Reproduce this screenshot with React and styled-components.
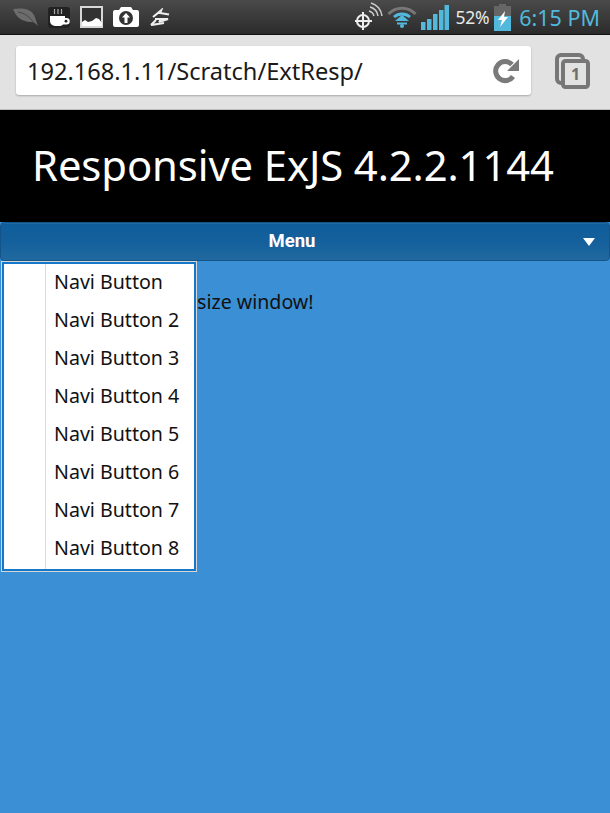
import React from "react";
import styled, { createGlobalStyle } from "styled-components";

const Global = createGlobalStyle`
  html, body { margin: 0; padding: 0; background: #3a8fd5; }
  * { box-sizing: border-box; }
`;
const Page = styled.div`
  position: relative; width: 610px; height: 813px; overflow: hidden;
  display: flex; flex-direction: column; background: #3a8fd5;
  font-family: "Noto Sans", "Open Sans", sans-serif;
`;
const StatusBar = styled.div`
  height: 35px; display: flex; align-items: center; padding: 0 10px 0 13px;
  background: linear-gradient(#4a4a4a, #2b2b2b); border-bottom: 1px solid #111;
`;
const IconGroup = styled.div`display: flex; align-items: center; gap: 10px;`;
const StatusRight = styled.div`margin-left: auto; display: flex; align-items: center; gap: 4px;`;
const Percent = styled.span`font-size: 17.500px; color: #e8e8e8; margin: 0 1px 0 3px; letter-spacing: -0.3px;`;
const Clock = styled.span`font-size: 21.500px; color: #52b9dc; margin-left: 4px; white-space: nowrap;`;
const Chrome = styled.div`
  height: 75px; background: #e2e2e2; border-bottom: 1px solid #bdbdbd;
  display: flex; align-items: center; padding: 0 20px 3px 16px;
`;
const UrlBox = styled.div`
  width: 515px; height: 49px; background: #fff; border-radius: 3px; box-shadow: 0 1px 2px rgba(0,0,0,.25);
  display: flex; align-items: center; justify-content: space-between; padding: 0 11px 0 11px;
`;
const UrlText = styled.span`font-size: 23.600px; color: #1a1a1a; white-space: nowrap;`;
const TabsButton = styled.div`margin-left: auto; display: flex;`;
const Banner = styled.div`
  height: 112px; background: #000; color: #fff; display: flex; align-items: center;
  padding: 0 0 3px 32px; font-size: 41.800px; white-space: nowrap; letter-spacing: -0.1px;
`;
const MenuBar = styled.div`
  position: relative; height: 39px; display: flex; align-items: center; justify-content: center;
  background: linear-gradient(#0e5d9b, #14609c 50%, #21699f); border: 1px solid #155489; border-radius: 4px;
  color: #fff; font: bold 18.500px "Roboto", "Noto Sans", sans-serif; padding: 0 26px 2px 0;
  box-shadow: inset 0 1px 0 #1e6aa6;
`;
const Arrow = styled.span`
  position: absolute; right: 14px; top: 15px; width: 0; height: 0;
  border-left: 6.500px solid transparent; border-right: 6.500px solid transparent; border-top: 8px solid #fff;
`;
const Content = styled.div`
  flex: 1; padding: 27px 0 0 197px; font-size: 19.600px; color: #111; white-space: nowrap;
`;
const Dropdown = styled.div`
  position: absolute; left: 2px; top: 262px; width: 194px; height: 309px;
  background: #fff; border: 2px solid #1577c9; outline: 1px solid #d6d6d6;
  box-shadow: 1px 1px 0 #ddd; display: flex; flex-direction: column;
`;
const Divider = styled.div`position: absolute; left: 41px; top: 0; bottom: 0; width: 1px; background: #dcdcdc;`;
const Item = styled.div`
  height: 38px; flex: none; display: flex; align-items: center; padding: 0 0 4px 50px;
  font-size: 19.600px; color: #111; white-space: nowrap;
`;

const Leaf = () => (
  <svg width="25" height="18" viewBox="0 0 25 18">
    <path d="M0 1C8 0 17 0 21 7c1.500 3 2 6 4 11-3-3-4-4-7-4C9 14 3 9 0 1z" fill="#6c6c6c"/>
    <path d="M5 4c6 1 11 4 16 11" stroke="#444" strokeWidth="1" fill="none"/>
  </svg>
);
const Cup = () => (
  <svg width="22" height="21" viewBox="0 0 22 21">
    <rect width="22" height="21" rx="3" fill="#222"/>
    <path d="M6.500 2v5M10 2v5M13.500 2v5" stroke="#aaa" strokeWidth="1.200"/>
    <path d="M2 9h15v2h1.500a3.200 3.200 0 0 1 0 6.500H15c-1 1-2.500 1.500-4 1.500H7a5 5 0 0 1-5-5z" fill="#fff"/>
    <circle cx="18" cy="14.200" r="1.400" fill="#222"/>
  </svg>
);
const Picture = () => (
  <svg width="23" height="22" viewBox="0 0 23 22">
    <rect x="1" y="1" width="21" height="20" fill="#333" stroke="#d8d8d8" strokeWidth="2"/>
    <path d="M2 20v-4l3-2 3 2 4-1 4-3 3 1 3 4v3z" fill="#fff"/>
  </svg>
);
const Camera = () => (
  <svg width="26" height="20" viewBox="0 0 26 20">
    <path d="M2 3h4l2-3h10l2 3h4a2 2 0 0 1 2 2v13a2 2 0 0 1-2 2H2a2 2 0 0 1-2-2V5a2 2 0 0 1 2-2z" fill="#fff"/>
    <circle cx="13" cy="11" r="7" fill="#333"/>
    <path d="M13 6l4 4.500h-2.500v5.500h-3v-5.500H9z" fill="#fff"/>
  </svg>
);
const Zip = () => (
  <svg width="22" height="18" viewBox="0 0 22 18" fill="none" stroke="#eee" strokeWidth="2.200" strokeLinejoin="miter">
    <path d="M4 9l8-6.500L11 5l9 1.500" />
    <path d="M6 11h13l-9 3 1.500-1.500" />
    <path d="M2 17l5-5M2 17l13-2" />
  </svg>
);
const Gps = () => (
  <svg width="28" height="31" viewBox="0 0 28 31" fill="none" stroke="#eee">
    <circle cx="8" cy="19" r="6" strokeWidth="2"/>
    <path d="M8 10v18M-1 19h18" strokeWidth="2"/>
    <path d="M14 9a7 7 0 0 1 5 5M15 5a11 11 0 0 1 8 9M16 1a15 15 0 0 1 11 13" stroke="#ccc" strokeWidth="1.500"/>
  </svg>
);
const Wifi = () => (
  <svg width="30" height="22" viewBox="0 0 30 22" fill="none">
    <path d="M1.500 8a19 19 0 0 1 27 0" stroke="#777" strokeWidth="3"/>
    <path d="M7 11a12 12 0 0 1 16 0" stroke="#52b9dc" strokeWidth="3"/>
    <path d="M15 9l7 6H8z" fill="#52b9dc"/>
    <path d="M10 17.500h10" stroke="#52b9dc" strokeWidth="2"/>
    <circle cx="15" cy="20" r="2" fill="#52b9dc"/>
  </svg>
);
const Signal = () => (
  <svg width="28" height="25" viewBox="0 0 28 25" fill="#52b9dc">
    <rect x="0" y="17" width="4.500" height="8"/><rect x="6" y="14" width="4.500" height="11"/>
    <rect x="12" y="9" width="4.500" height="16"/><rect x="18" y="5" width="4.500" height="20"/>
    <rect x="23.500" y="0" width="4.500" height="25"/>
  </svg>
);
const Battery = () => (
  <svg width="17" height="27" viewBox="0 0 17 27">
    <rect x="5" y="0" width="7" height="2" fill="#666"/>
    <rect x="0" y="2" width="17" height="10" fill="#666"/>
    <rect x="0" y="12" width="17" height="15" fill="#52b9dc"/>
    <path d="M11 7L4 16h4l-2 7 8-10h-4z" fill="#fff"/>
  </svg>
);
const Reload = () => (
  <svg width="28" height="28" viewBox="0 0 28 28" fill="none">
    <path d="M21 19.500a9.500 9.500 0 1 1-1-12" stroke="#7a7a7a" strokeWidth="5"/>
    <path d="M27 2v12H15z" fill="#7a7a7a"/>
  </svg>
);
const Tabs = () => (
  <svg width="35" height="36" viewBox="0 0 35 36" fill="none">
    <rect x="2" y="2" width="26" height="28" rx="4" stroke="#777" strokeWidth="4"/>
    <rect x="8" y="8" width="25" height="26" rx="2.500" fill="#e2e2e2" stroke="#777" strokeWidth="4"/>
    <text x="20.500" y="27" fontFamily="Noto Sans, sans-serif" fontWeight="bold" fontSize="16" fill="#6e6e6e" textAnchor="middle">1</text>
  </svg>
);

const items = ["Navi Button", "Navi Button 2", "Navi Button 3", "Navi Button 4", "Navi Button 5", "Navi Button 6", "Navi Button 7", "Navi Button 8"];

export default function App() {
  return (
    <Page>
      <Global />
      <StatusBar>
        <IconGroup>
          <Leaf /><Cup /><Picture /><Camera /><Zip />
        </IconGroup>
        <StatusRight>
          <Gps />
          <Wifi />
          <Signal />
          <Percent>52%</Percent>
          <Battery />
          <Clock>6:15 PM</Clock>
        </StatusRight>
      </StatusBar>
      <Chrome>
        <UrlBox>
          <UrlText>192.168.1.11/Scratch/ExtResp/</UrlText>
          <Reload />
        </UrlBox>
        <TabsButton><Tabs /></TabsButton>
      </Chrome>
      <Banner>Responsive ExJS 4.2.2.1144</Banner>
      <MenuBar>Menu<Arrow /></MenuBar>
      <Content>size window!</Content>
      <Dropdown>
        <Divider />
        {items.map((t) => <Item key={t}>{t}</Item>)}
      </Dropdown>
    </Page>
  );
}
